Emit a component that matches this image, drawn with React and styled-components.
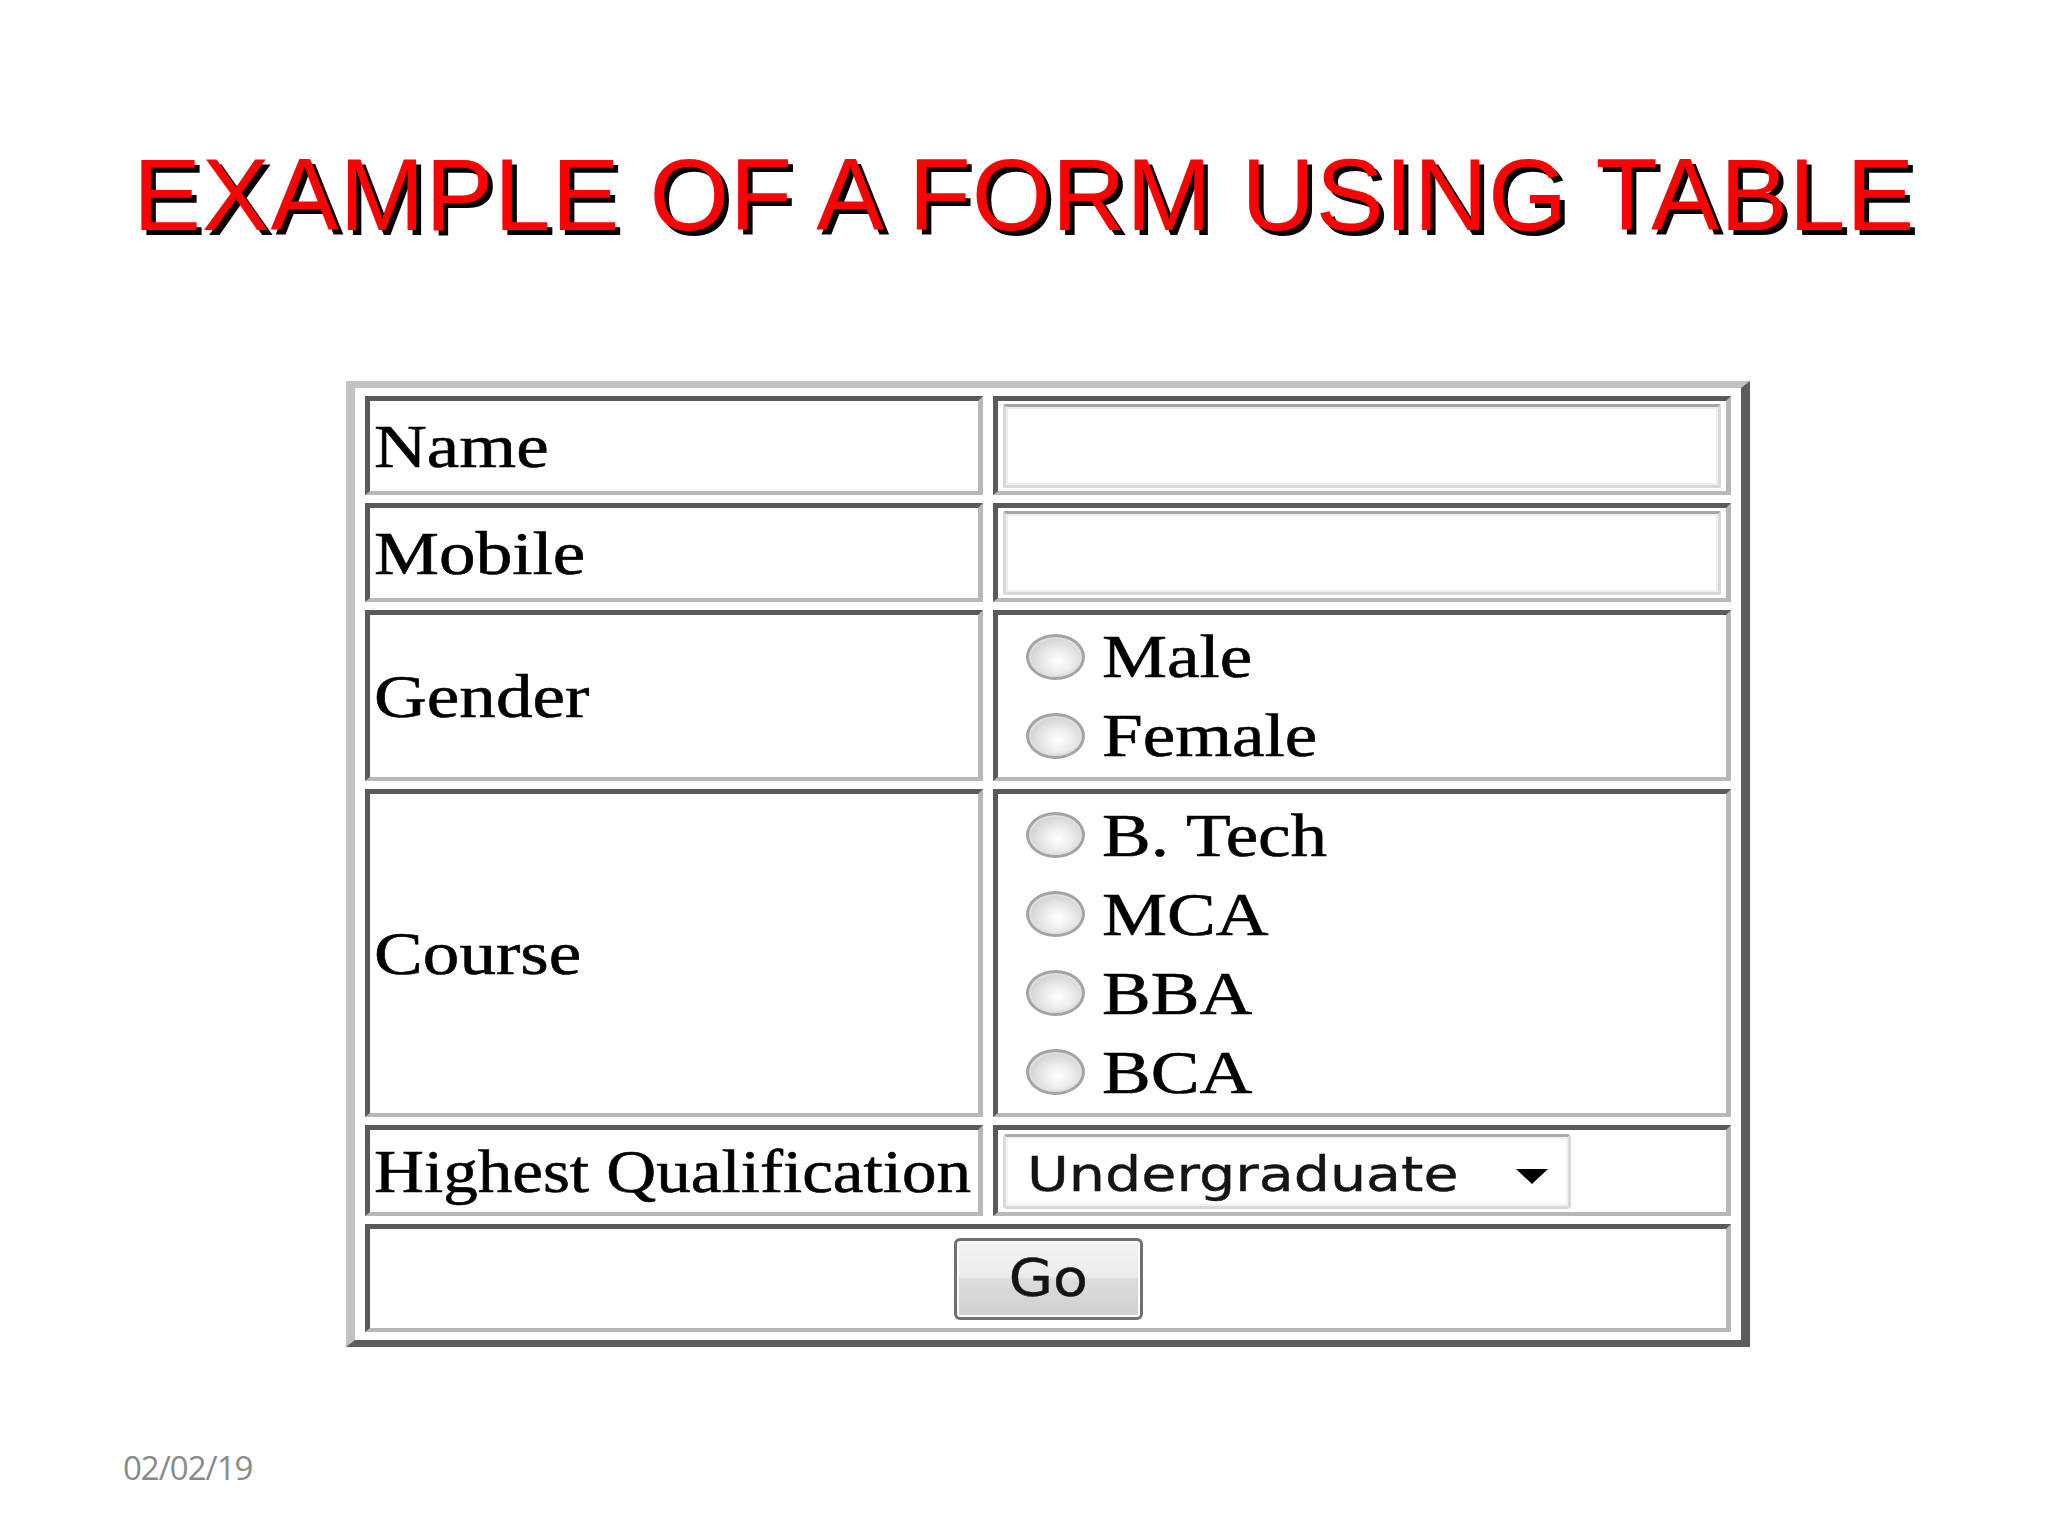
import React from 'react'
import styled, { createGlobalStyle } from 'styled-components'

const GlobalStyle = createGlobalStyle`
  html, body {
    margin: 0;
    padding: 0;
    background: #ffffff;
  }
  body {
    width: 2048px;
    height: 1536px;
    overflow: hidden;
  }
`

const Slide = styled.div`
  width: 2048px;
  height: 1536px;
  box-sizing: border-box;
  display: flex;
  flex-direction: column;
  align-items: flex-start;
  padding: 143px 0 52px 0;
  background: #ffffff;
`

const Title = styled.h1`
  align-self: stretch;
  margin: 0;
  font-family: "Liberation Sans", Arial, sans-serif;
  font-weight: normal;
  font-size: 102px;
  line-height: 104px;
  letter-spacing: 0.8px;
  color: #ff0000;
  text-align: center;
  text-shadow: 5px 5px 0 #000000;
  white-space: nowrap;
`

const FormTable = styled.table`
  margin: 134px 0 0 346px;
  border-collapse: separate;
  border-spacing: 10px 8px;
  border-style: solid;
  border-width: 7px 9px 7px 9px;
  border-color: #c3c3c3 #5c5c5c #5c5c5c #c3c3c3;
  background: #ffffff;
  font-family: "Liberation Serif", "Times New Roman", serif;
`

const Row = styled.tr`
  height: ${p => p.$h}px;
`

const Cell = styled.td`
  width: ${p => (p.$w ? `${p.$w}px` : 'auto')};
  padding: 0 ${p => p.$pad || 4}px;
  border-style: solid;
  border-width: 5px 5px 4px 5px;
  border-color: #5a5a5a #b8b8b8 #b8b8b8 #5a5a5a;
  vertical-align: middle;
  text-align: ${p => (p.$center ? 'center' : 'left')};
`

const Label = styled.span`
  display: inline-block;
  font-family: "Liberation Serif", "Times New Roman", serif;
  font-size: 62px;
  color: #000000;
  -webkit-text-stroke: 0.6px #000000;
  white-space: nowrap;
  transform: scaleX(${p => p.$sx || 1.18});
  transform-origin: left center;
`

const TextBox = styled.input`
  display: block;
  box-sizing: border-box;
  width: 100%;
  height: 84px;
  margin: 0;
  padding: 0 10px;
  border: 3px solid #d6d9de;
  border-top-color: #a6a6a6;
  border-radius: 2px;
  box-shadow: inset 0 0 0 2px #eeeeee;
  background: #ffffff;
  outline: none;
`

const Options = styled.div`
  display: flex;
  flex-direction: column;
`

const Option = styled.label`
  display: flex;
  align-items: center;
  height: 79px;
  padding-left: 23px;
`

const Radio = styled.span`
  flex: none;
  box-sizing: border-box;
  width: 59px;
  height: 46px;
  margin-right: 17px;
  border-radius: 50%;
  border: 3px solid #a4a4a4;
  background: radial-gradient(
    ellipse at 55% 60%,
    #ffffff 0%,
    #f0f0f0 28%,
    #d4d4d4 68%,
    #bdbdbd 100%
  );
  box-shadow: inset 0 0 0 2px #e0e0e0;
`

const Select = styled.div`
  box-sizing: border-box;
  width: 568px;
  height: 75px;
  display: flex;
  align-items: center;
  padding: 0 20px 0 21px;
  border: 3px solid #dadada;
  border-top-color: #ababab;
  border-radius: 4px;
  box-shadow: inset 0 0 0 2px #f2f2f2;
  background: #ffffff;
`

const SelectText = styled.span`
  display: inline-block;
  margin-top: 6px;
  font-family: "DejaVu Sans", Tahoma, sans-serif;
  font-size: 48px;
  color: #141414;
  -webkit-text-stroke: 0.4px #141414;
  white-space: nowrap;
  transform: scaleX(1.19);
  transform-origin: left center;
`

const Arrow = styled.svg`
  flex: none;
  margin-left: auto;
  margin-top: 10px;
`

const GoButton = styled.button`
  box-sizing: border-box;
  width: 189px;
  height: 82px;
  padding: 0;
  display: inline-flex;
  align-items: center;
  justify-content: center;
  vertical-align: middle;
  border: 3px solid #707070;
  border-radius: 6px;
  background: linear-gradient(
    to bottom,
    #f3f3f3 0%,
    #ececec 47%,
    #dddddd 50%,
    #cfcfcf 100%
  );
  box-shadow: inset 0 0 0 2px #fbfbfb;
`

const GoText = styled.span`
  display: inline-block;
  font-family: "DejaVu Sans", Tahoma, sans-serif;
  font-size: 51px;
  color: #141414;
  -webkit-text-stroke: 0.4px #141414;
  transform: scaleX(1.12);
`

const DateStamp = styled.div`
  margin: auto 0 0 123px;
  font-family: "Open Sans", "Noto Sans", sans-serif;
  font-size: 33px;
  line-height: 33px;
  letter-spacing: -1px;
  color: #8a8a8a;
`

const genders = ['Male', 'Female']
const courses = ['B. Tech', 'MCA', 'BBA', 'BCA']

export default function App () {
  return (
    <>
      <GlobalStyle />
      <Slide>
        <Title>EXAMPLE OF A FORM USING TABLE</Title>
        <FormTable>
          <tbody>
            <Row $h={99}>
              <Cell $w={600}><Label>Name</Label></Cell>
              <Cell $w={718} $pad={5}><TextBox type='text' /></Cell>
            </Row>
            <Row $h={99}>
              <Cell><Label>Mobile</Label></Cell>
              <Cell $pad={5}><TextBox type='text' /></Cell>
            </Row>
            <Row $h={171}>
              <Cell><Label>Gender</Label></Cell>
              <Cell $pad={5}>
                <Options>
                  {genders.map(g => (
                    <Option key={g}><Radio /><Label>{g}</Label></Option>
                  ))}
                </Options>
              </Cell>
            </Row>
            <Row $h={328}>
              <Cell><Label>Course</Label></Cell>
              <Cell $pad={5}>
                <Options>
                  {courses.map(c => (
                    <Option key={c}><Radio /><Label>{c}</Label></Option>
                  ))}
                </Options>
              </Cell>
            </Row>
            <Row $h={91}>
              <Cell><Label $sx={1.115}>Highest Qualification</Label></Cell>
              <Cell $pad={5}>
                <Select>
                  <SelectText>Undergraduate</SelectText>
                  <Arrow width='32' height='15' viewBox='0 0 32 15'>
                    <polygon points='0,0 32,0 16,15' fill='#000' />
                  </Arrow>
                </Select>
              </Cell>
            </Row>
            <Row $h={108}>
              <Cell colSpan={2} $center>
                <GoButton type='button'><GoText>Go</GoText></GoButton>
              </Cell>
            </Row>
          </tbody>
        </FormTable>
        <DateStamp>02/02/19</DateStamp>
      </Slide>
    </>
  )
}
